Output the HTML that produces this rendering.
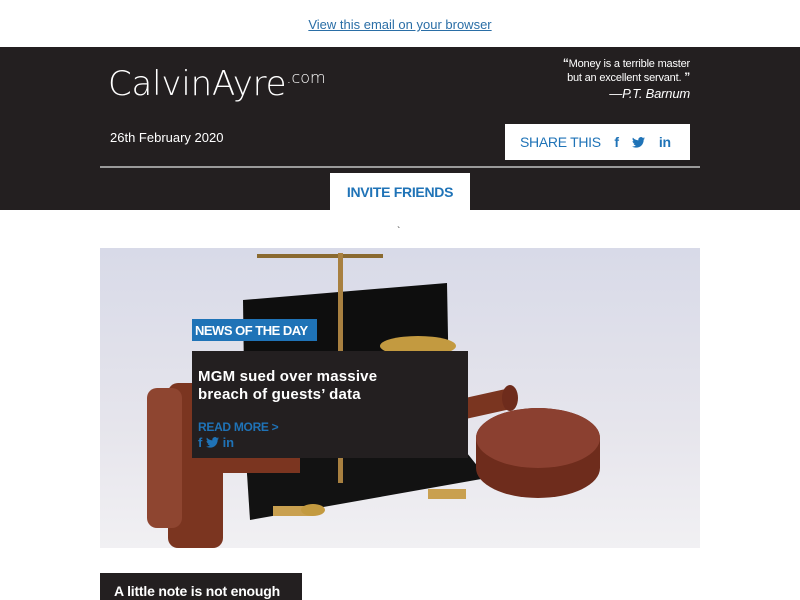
<!DOCTYPE html>
<html><head><meta charset="utf-8"><style>
*{margin:0;padding:0;box-sizing:border-box}
body{width:800px;height:600px;overflow:hidden;background:#fff;font-family:"Liberation Sans",Arial,sans-serif;position:relative}
.a{position:absolute}
</style></head><body>
<div class="a" style="left:0;top:17px;width:800px;text-align:center;font-size:13px;color:#2a6ea6;text-decoration:underline">View this email on your browser</div>
<div class="a" style="left:0;top:47px;width:800px;height:163px;background:#231f20"></div>
<div class="a" style="left:108px;top:64px;color:#fff;font-size:34px;letter-spacing:-0.2px;font-family:'DejaVu Sans','Liberation Sans',sans-serif;font-weight:300">CalvinAyre<span style="font-size:16px;vertical-align:12px;letter-spacing:0">.com</span></div>
<div class="a" style="right:110px;top:57px;text-align:right;color:#fff;font-size:11px;line-height:13px;letter-spacing:-0.2px"><b style="font-size:12px">&#8220;</b>Money is a terrible master<br>but an excellent servant. <b style="font-size:12px">&#8221;</b><br><i style="font-size:13px;line-height:18px">—P.T. Barnum</i></div>
<div class="a" style="left:110px;top:130px;color:#fff;font-size:13px">26th February 2020</div>
<div class="a" style="left:505px;top:124px;width:185px;height:36px;background:#fff;color:#1f73b7;font-size:14px;padding:10px 0 0 15px;letter-spacing:-0.3px">SHARE THIS <b style="margin-left:10px">f</b> <svg width="13" height="11" viewBox="0 0 24 20" style="margin-left:10px;vertical-align:-1px"><path fill="#1f73b7" d="M24 2.4a10 10 0 0 1-2.8.8A5 5 0 0 0 23.3.4a10 10 0 0 1-3.1 1.2A4.9 4.9 0 0 0 11.8 6 14 14 0 0 1 1.7.9a4.9 4.9 0 0 0 1.5 6.6A4.9 4.9 0 0 1 1 6.9 4.9 4.9 0 0 0 4.9 11.8a5 5 0 0 1-2.2.1 4.9 4.9 0 0 0 4.6 3.4A9.9 9.9 0 0 1 0 17.3 14 14 0 0 0 7.5 19.5c9.1 0 14-7.5 14-14v-.6A10 10 0 0 0 24 2.4z"/></svg> <b style="margin-left:10px">in</b></div>
<div class="a" style="left:100px;top:166px;width:600px;height:2px;background:#9a9a9a"></div>
<div class="a" style="left:330px;top:173px;width:140px;height:37px;background:#fff;color:#1f73b7;font-size:14px;font-weight:bold;text-align:center;padding-top:11px;letter-spacing:-0.3px">INVITE FRIENDS</div>
<div class="a" style="left:397px;top:226px;font-size:10px;color:#333">`</div>
<svg class="a" style="left:100px;top:248px" width="600" height="300" viewBox="0 0 600 300">
<defs><linearGradient id="bg" x1="0" y1="0" x2="0" y2="1"><stop offset="0" stop-color="#d8dae8"/><stop offset=".6" stop-color="#e6e5ec"/><stop offset="1" stop-color="#f1f0f3"/></linearGradient></defs>
<rect width="600" height="300" fill="url(#bg)"/>
<polygon points="143,52 347,35 350,195 145,200" fill="#0e0e0e"/>
<polygon points="145,195 355,190 387,230 150,272" fill="#121212"/>
<rect x="173" y="258" width="40" height="10" fill="#c9a050"/><rect x="328" y="241" width="38" height="10" fill="#c9a050"/>
<path d="M157 8h126" stroke="#8a6a30" stroke-width="4"/>
<rect x="238" y="5" width="5" height="230" fill="#a88040"/>
<ellipse cx="318" cy="98" rx="38" ry="10" fill="#c39a40"/>
<ellipse cx="213" cy="262" rx="12" ry="6" fill="#c39a40"/>
<path d="M320 160 L410 140 L415 160 L325 180z" fill="#7a3520"/>
<ellipse cx="410" cy="150" rx="8" ry="13" fill="#6e2c1c"/>
<path d="M376 190 a62 30 0 0 1 124 0 v30 a62 30 0 0 1 -124 0z" fill="#6e2c1c"/>
<ellipse cx="438" cy="190" rx="62" ry="30" fill="#8b4030"/>
<rect x="68" y="135" width="55" height="165" rx="10" fill="#7b3520"/>
<rect x="47" y="140" width="35" height="140" rx="10" fill="#8e4530"/>
<rect x="120" y="195" width="80" height="30" fill="#7b3520"/>
</svg>
<div class="a" style="left:192px;top:319px;width:125px;height:22px;background:#1f73b7;color:#fff;font-size:13px;font-weight:bold;padding:4px 0 0 3px;letter-spacing:-0.5px">NEWS OF THE DAY</div>
<div class="a" style="left:192px;top:351px;width:276px;height:107px;background:#231f20"></div>
<div class="a" style="left:198px;top:368px;color:#fff;font-size:15px;font-weight:bold;line-height:18px;letter-spacing:0.2px">MGM sued over massive<br>breach of guests’ data</div>
<div class="a" style="left:198px;top:420px;color:#1f73b7;font-size:12px;font-weight:bold;letter-spacing:-0.3px">READ MORE &gt;</div>
<div class="a" style="left:198px;top:435px;color:#1f73b7;font-size:13px;font-weight:bold">f <svg width="13" height="11" viewBox="0 0 24 20" style="vertical-align:-1px"><path fill="#1f73b7" d="M24 2.4a10 10 0 0 1-2.8.8A5 5 0 0 0 23.3.4a10 10 0 0 1-3.1 1.2A4.9 4.9 0 0 0 11.8 6 14 14 0 0 1 1.7.9a4.9 4.9 0 0 0 1.5 6.6A4.9 4.9 0 0 1 1 6.9 4.9 4.9 0 0 0 4.9 11.8a5 5 0 0 1-2.2.1 4.9 4.9 0 0 0 4.6 3.4A9.9 9.9 0 0 1 0 17.3 14 14 0 0 0 7.5 19.5c9.1 0 14-7.5 14-14v-.6A10 10 0 0 0 24 2.4z"/></svg> in</div>
<div class="a" style="left:100px;top:573px;width:202px;height:27px;background:#231f20;color:#fff;font-size:14px;font-weight:bold;padding:10px 0 0 14px;letter-spacing:-0.2px">A little note is not enough</div>
</body></html>
